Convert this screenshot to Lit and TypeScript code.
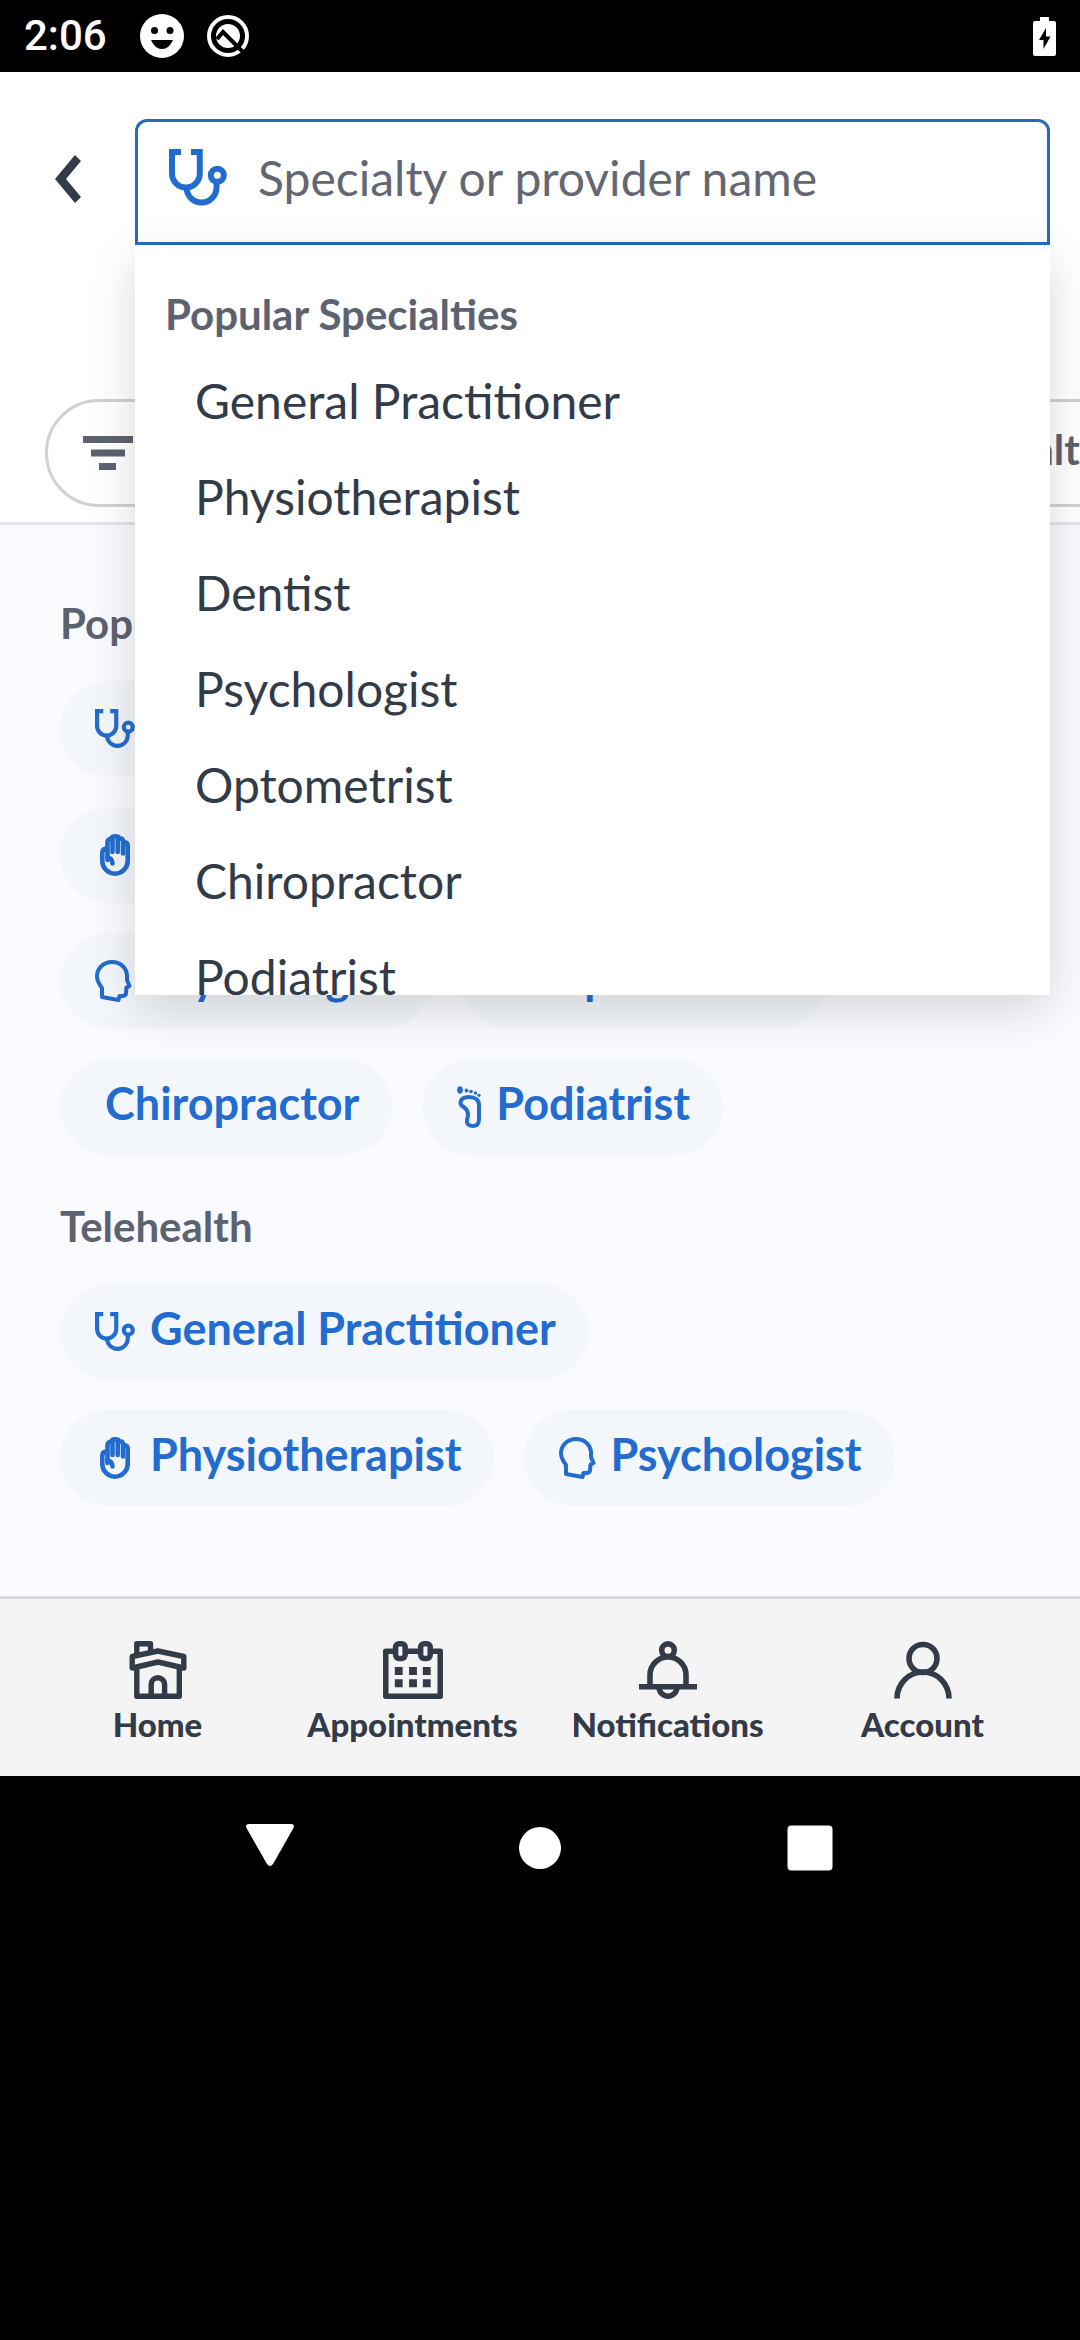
import { LitElement, html, svg, css, nothing } from "lit";
import { customElement, property } from "lit/decorators.js";

type IconName =
  | "stethoscope" | "hand" | "head" | "foot" | "glasses" | "filter" | "back"
  | "home" | "calendar" | "bell" | "user";

const ICONS: Record<IconName, { w: number; h: number; body: unknown }> = {
  stethoscope: {
    w: 58, h: 58,
    body: svg`<g fill="none" stroke="currentColor" stroke-width="6">
      <path d="M12 3H3V24.6a13.9 13.9 0 0 0 27.8 0V3H22"/>
      <path d="M17.5 38.5a15 15 0 0 0 30 0V33"/>
      <circle cx="48.3" cy="26.3" r="6.5"/></g>`,
  },
  hand: {
    w: 30, h: 42,
    body: svg`<g fill="none" stroke="currentColor" stroke-width="4.600" stroke-linecap="round" stroke-linejoin="round">
      <path d="M7.500 26V8Q7.500 5 11 5Q11.500 2.300 15 2.300Q18.500 2.300 19 4Q23 4 23.500 8Q27.700 8 27.700 12V27a12.700 12.700 0 0 1-25.400 0V19Q2.300 15 6 14.500"/>
      <path d="M12.500 5V18M17.700 3V18M23 7V19.500M7.500 23.500Q12 24 12.500 29.500"/></g>`,
  },
  head: {
    w: 36, h: 42,
    body: svg`<path fill="none" stroke="currentColor" stroke-width="4" stroke-linejoin="round"
      d="M7 37V28C4 24 2 21 2 16.500C2 8 9 2 17 2C25 2 31 7 32 15L32 20L34.500 26L31.500 27.500L31 33.500Q30.500 36 27 36L24.500 36L23.500 40Z"/>`,
  },
  foot: {
    w: 24, h: 42,
    body: svg`<ellipse cx="3" cy="4" rx="2.900" ry="3.800"/><circle cx="9.500" cy="4.500" r="1.900"/><circle cx="14" cy="5.500" r="1.800"/>
      <circle cx="18.500" cy="7" r="1.700"/><circle cx="22" cy="9.300" r="1.600"/>
      <path fill="none" stroke="currentColor" stroke-width="4" d="M3.500 17C3.500 12.500 8 11 12 11C18 11 22 14 22 19V33C22 38 20 40 15.500 40C11 40 9.500 37 10 34C11 30 12 27 9 23C7 20.500 3.500 20 3.500 17Z"/>`,
  },
  glasses: {
    w: 38, h: 30,
    body: svg`<g fill="none" stroke="currentColor" stroke-width="4"><circle cx="9" cy="18" r="7"/>
      <circle cx="29" cy="18" r="7"/><path d="M16 17Q19 14 22 17M2 17L5 4M36 17L33 4"/></g>`,
  },
  filter: {
    w: 50, h: 34,
    body: svg`<path d="M0 0H50V7H0ZM8 13.500H42V20.500H8ZM16 27H33V34H16Z"/>`,
  },
  back: {
    w: 26, h: 48,
    body: svg`<path d="M20 0L26 6L11 24L26 42L20 48L0 24Z"/>`,
  },
  home: {
    w: 57, h: 58,
    body: svg`<g fill="none" stroke="currentColor" stroke-width="5.400" stroke-linejoin="round">
      <path d="M7.300 14V2.700H21V10"/><path d="M2.700 15.500L28.500 10L54.300 15.500V27L28.500 21L2.700 27Z"/>
      <path d="M7.300 27V55.300H49.800V27"/><path d="M21.700 55V43.500a6.700 6.700 0 0 1 13.400 0V55"/></g>`,
  },
  calendar: {
    w: 61, h: 59,
    body: svg`<g fill="none" stroke="currentColor" stroke-width="5.600" stroke-linejoin="round">
      <path d="M13 10.400H2.800V56.200H58.200V10.400H48M23 10.400H38"/>
      <rect x="12.800" y="2.800" width="9.700" height="15" rx="3.500"/><rect x="38.300" y="2.800" width="9.700" height="15" rx="3.500"/></g>
      <path d="M12 26.500H20V34.500H12ZM26.500 26.500H34.500V34.500H26.500ZM40.500 26.500H48.500V34.500H40.500ZM12 39H20V47H12ZM26.500 39H34.500V47H26.500ZM40.500 39H48.500V47H40.500Z"/>`,
  },
  bell: {
    w: 58, h: 58,
    body: svg`<g fill="none" stroke="currentColor" stroke-width="5.600">
      <circle cx="29" cy="9.200" r="6.300"/><path d="M11 45V34a18 18 0 0 1 36 0V45M0 45.700H58"/>
      <path d="M20.200 46.400a8.800 8.800 0 0 0 17.600 0"/></g>`,
  },
  user: {
    w: 58, h: 58,
    body: svg`<g fill="none" stroke="currentColor" stroke-width="5.600">
      <circle cx="29" cy="17.500" r="14"/><path d="M3 57.500a26 26.500 0 0 1 52 0"/></g>`,
  },
};

@customElement("app-icon")
class AppIcon extends LitElement {
  @property() name: IconName = "stethoscope";
  static styles = css`
    :host { display: block; }
    .glyph { display: block; height: 100%; width: 100%; fill: currentColor; overflow: visible; }
  `;
  render() {
    const i = ICONS[this.name];
    return html`<svg class="glyph" viewBox="0 0 ${i.w} ${i.h}" aria-hidden="true">${i.body}</svg>`;
  }
}

interface Chip { label: string; icon?: IconName }

@customElement("specialty-section")
class SpecialtySection extends LitElement {
  @property() heading = "";
  @property({ attribute: false }) rows: Chip[][] = [];
  static styles = css`
    :host { display: block; }
    .title { margin: 0 0 34px; font-size: 42px; line-height: 48px; font-weight: 700; color: #5d6270; }
    .rows { display: flex; flex-direction: column; gap: 30px; }
    .row { display: flex; gap: 30px; }
    .chip {
      display: flex; align-items: center; gap: 15px; flex: none; height: 96px;
      padding: 0 33px 8px 45px; border: 0; border-radius: 48px; background: #f3f7fc;
      font: 700 45px/54px Lato, sans-serif; color: #236ccf;
    }
    .with-icon { padding-left: 35px; }
    .icon { flex: none; margin-top: 8px; }
    .stethoscope { width: 40px; height: 40px; }
    .hand { width: 40px; height: 42px; }
    .head { width: 36px; height: 42px; }
    .foot { width: 24px; height: 42px; }
    .glasses { width: 38px; height: 30px; }
  `;
  render() {
    return html`
      <h2 class="title">${this.heading}</h2>
      <div class="rows">
        ${this.rows.map((row) => html`<div class="row">
          ${row.map((c) => html`<button class="chip ${c.icon ? "with-icon" : ""}">
            ${c.icon ? html`<app-icon class="icon ${c.icon}" .name=${c.icon}></app-icon>` : nothing}${c.label}
          </button>`)}
        </div>`)}
      </div>`;
  }
}

const GP: Chip = { label: "General Practitioner", icon: "stethoscope" };
const PHYSIO: Chip = { label: "Physiotherapist", icon: "hand" };
const PSYCH: Chip = { label: "Psychologist", icon: "head" };

const POPULAR: Chip[][] = [
  [GP],
  [PHYSIO, { label: "Dentist" }],
  [PSYCH, { label: "Optometrist", icon: "glasses" }],
  [{ label: "Chiropractor" }, { label: "Podiatrist", icon: "foot" }],
];
const TELEHEALTH: Chip[][] = [[GP], [PHYSIO, PSYCH]];

const SUGGESTIONS = [
  "General Practitioner", "Physiotherapist", "Dentist", "Psychologist",
  "Optometrist", "Chiropractor", "Podiatrist",
];

const TABS: { label: string; icon: IconName }[] = [
  { label: "Home", icon: "home" },
  { label: "Appointments", icon: "calendar" },
  { label: "Notifications", icon: "bell" },
  { label: "Account", icon: "user" },
];

@customElement("app-root")
class AppRoot extends LitElement {
  static styles = css`
    :host {
      display: flex; flex-direction: column; min-height: 100vh; background: #000;
      font-family: Lato, sans-serif; color: #323b47; overflow: hidden;
    }
    .status {
      display: flex; align-items: center; height: 72px; padding: 0 24px; color: #fff;
      font: 500 42px/48px Roboto, sans-serif;
    }
    .face { width: 44px; height: 44px; margin-left: 33px; }
    .swirl { width: 42px; height: 42px; margin-left: 23px; }
    .battery { width: 23px; height: 39px; margin-left: auto; }

    .header { background: #fff; border-bottom: 3px solid #e3e4e8; padding-bottom: 15px; }
    .search-row { display: flex; align-items: center; padding: 47px 30px 0 0; }
    .back {
      display: flex; justify-content: center; flex: none; width: 135px; padding: 0 0 6px;
      border: 0; background: none; color: #323b47;
    }
    .back-icon { width: 26px; height: 48px; }
    .combo { position: relative; flex: 1; min-width: 0; }
    .field {
      display: flex; align-items: center; gap: 31px; box-sizing: border-box; height: 126px;
      padding: 0 30px 8px 31px; border: 3px solid #286bbb; border-radius: 12px 12px 0 0; background: #fff;
    }
    .field-icon { width: 58px; height: 58px; flex: none; color: #236ccf; }
    .input {
      flex: 1; min-width: 0; padding: 0; border: 0; outline: 0; background: none;
      font: 400 48px/60px Lato, sans-serif; color: #323b47;
    }
    .input::placeholder { color: #646772; opacity: 1; }
    .menu {
      position: absolute; z-index: 2; top: 100%; left: 0; right: 0; box-sizing: border-box;
      height: 750px; overflow: hidden; padding-top: 44px; background: #fff;
      box-shadow: 0 15px 45px rgba(0, 0, 0, 0.15);
    }
    .menu-title { margin: 0 30px; font-size: 42px; line-height: 50px; font-weight: 700; color: #5d6270; }
    .options { margin: 14px 0 0; padding: 0; list-style: none; }
    .option {
      display: block; width: 100%; height: 96px; padding: 0 60px; border: 0; background: none;
      text-align: left; font: 400 48px/58px Lato, sans-serif; color: #323b47;
    }

    .filters { display: flex; gap: 30px; margin-top: 154px; padding-left: 45px; overflow: hidden; }
    .pill {
      display: flex; align-items: center; flex: none; box-sizing: border-box; height: 108px; padding: 0 35px 8px;
      border: 3px solid #d0d1d3; border-radius: 54px; background: #fff;
      font: 700 42px/48px Lato, sans-serif; color: #5d6270;
    }
    .pill-filter { width: 798px; padding-bottom: 0; }
    .filter-icon { width: 50px; height: 34px; }

    .content {
      display: flex; flex-direction: column; gap: 47px; padding: 74px 60px 90px; background: #f9fbff;
    }

    .tabs { display: flex; height: 177px; padding: 0 30px; border-top: 3px solid #d4d7db; background: #f4f4f4; }
    .tab {
      display: flex; flex: 1; flex-direction: column; align-items: center; gap: 5px; padding-top: 42px;
      font-size: 33px; line-height: 40px; font-weight: 900; color: #323b47; text-decoration: none;
    }
    .tab-icon { width: 62px; height: 58px; }

    .system { display: flex; height: 144px; padding: 0 135px; }
    .key { display: flex; flex: 1; align-items: center; justify-content: center; padding: 0; border: 0; background: none; }
    .key-icon { width: 48px; height: 48px; fill: #fff; }
  `;

  render() {
    return html`
      <div class="status">
        <span>2:06</span>
        <svg class="face" viewBox="0 0 44 44" aria-hidden="true">
          <circle cx="22" cy="22" r="22" fill="#fff"/>
          <circle cx="14.500" cy="16.500" r="3.500"/><circle cx="30" cy="16.500" r="3.500"/>
          <path d="M11 26H33Q29 35 22 35Q15 35 11 26Z"/>
        </svg>
        <svg class="swirl" viewBox="0 0 42 42" aria-hidden="true">
          <circle cx="21" cy="21" r="19" fill="none" stroke="#fff" stroke-width="4"/>
          <circle cx="21" cy="21" r="12" fill="#fff"/>
          <path d="M10 24L16 17L38 39" fill="none" stroke="#000" stroke-width="4"/>
        </svg>
        <svg class="battery" viewBox="0 0 23 39" aria-hidden="true">
          <path fill="#fff" d="M7 0H16V4H21Q23 4 23 6V37Q23 39 21 39H2Q0 39 0 37V6Q0 4 2 4H7Z"/>
          <path d="M13 11L6 23H10.500V32L17.500 19.500H13Z"/>
        </svg>
      </div>

      <header class="header">
        <div class="search-row">
          <button class="back" aria-label="Back"><app-icon class="back-icon" .name=${"back"}></app-icon></button>
          <div class="combo">
            <label class="field">
              <app-icon class="field-icon" .name=${"stethoscope"}></app-icon>
              <input class="input" type="text" placeholder="Specialty or provider name" aria-label="Specialty or provider name" />
            </label>
            <div class="menu">
              <h3 class="menu-title">Popular Specialties</h3>
              <ul class="options">
                ${SUGGESTIONS.map((s) => html`<li><button class="option">${s}</button></li>`)}
              </ul>
            </div>
          </div>
        </div>
        <div class="filters">
          <button class="pill pill-filter" aria-label="Filters"><app-icon class="filter-icon" .name=${"filter"}></app-icon></button>
          <button class="pill">Telehealth</button>
        </div>
      </header>

      <main class="content">
        <specialty-section heading="Popular Specialties" .rows=${POPULAR}></specialty-section>
        <specialty-section heading="Telehealth" .rows=${TELEHEALTH}></specialty-section>
      </main>

      <nav class="tabs">
        ${TABS.map((t) => html`<a class="tab" href="#"><app-icon class="tab-icon" .name=${t.icon}></app-icon>${t.label}</a>`)}
      </nav>

      <div class="system">
        <button class="key" aria-label="Back"><svg class="key-icon" viewBox="0 0 48 48"><path d="M3 0H45Q49 0 47.500 4L27 40Q24 44 21 40L0.500 4Q-1 0 3 0Z"/></svg></button>
        <button class="key" aria-label="Home"><svg class="key-icon" viewBox="0 0 48 48"><circle cx="24" cy="24" r="21"/></svg></button>
        <button class="key" aria-label="Recents"><svg class="key-icon" viewBox="0 0 48 48"><rect x="1.500" y="1.500" width="45" height="45" rx="4"/></svg></button>
      </div>
    `;
  }
}
